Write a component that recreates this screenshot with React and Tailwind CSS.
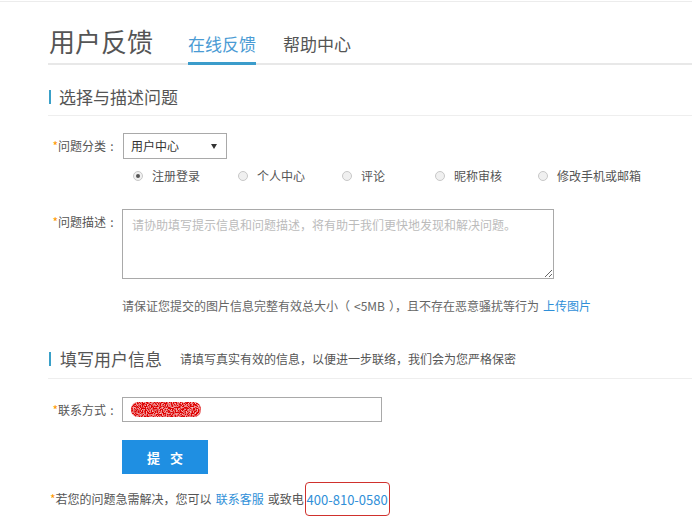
import React from "react";

const font = { fontFamily: '"Noto Sans CJK SC", "Noto Sans", sans-serif' };

function Label({ children }) {
  return (
    <div className="flex w-[70px] shrink-0 items-center justify-end text-[12px] leading-none text-[#555]">
      <span className="text-[#f90]">*</span>
      <span>{children}</span>
      <span className="inline-block w-[12px] text-center">:</span>
    </div>
  );
}

function Radio({ checked, label, w }) {
  return (
    <div className={`flex items-center ${w}`}>
      <span className="flex h-[10px] w-[10px] items-center justify-center rounded-full border border-[#c8c8c8] bg-[#f0f0f0]">
        {checked && <span className="h-[4px] w-[4px] rounded-full bg-[#555]" />}
      </span>
      <span className="ml-[9px] text-[12px] leading-none text-[#555]">{label}</span>
    </div>
  );
}

export default function App() {
  return (
    <div className="relative h-[528px] w-[692px] overflow-hidden bg-white" style={font}>
      <div className="mt-px h-px w-full bg-[#ececec]" />
      <div className="pl-[48px]">
        {/* Header */}
        <div className="flex h-[63px] items-end border-b-2 border-[#e8e8e8]">
          <div className="pb-[9px] pl-[1px] text-[26px] leading-none text-[#555]">用户反馈</div>
          <div className="-mb-[2px] ml-[35px] border-b-[3px] border-[#3b9ccb] pb-[10px] text-[17px] leading-none text-[#4a9bd4]">
            在线反馈
          </div>
          <div className="-mb-[2px] ml-[27px] border-b-[3px] border-transparent pb-[10px] text-[17px] leading-none text-[#555]">
            帮助中心
          </div>
        </div>

        {/* Section 1 */}
        <div className="mt-[23px]">
          <div className="flex items-center border-b border-[#eeeeee] pb-[10px] pl-px">
            <span className="h-[14px] w-[2px] bg-[#3aa0c8]" />
            <span className="ml-[8px] text-[17px] leading-none text-[#555]">选择与描述问题</span>
          </div>
        </div>

        {/* 问题分类 */}
        <div className="mt-[17px] flex items-center">
          <Label>问题分类</Label>
          <div className="ml-[5px] flex h-[26px] w-[104px] items-center justify-between border border-[#a9a9a9] pl-[7px] pr-[9px]">
            <span className="text-[12px] leading-none text-[#333]">用户中心</span>
            <svg width="6" height="5" viewBox="0 0 6 5">
              <path d="M0 0 L6 0 L3 5 Z" fill="#333" />
            </svg>
          </div>
        </div>
        <div className="mt-[11px] flex items-center pl-[85px]">
          <Radio checked label="注册登录" w="w-[105px]" />
          <Radio label="个人中心" w="w-[104px]" />
          <Radio label="评论" w="w-[93px]" />
          <Radio label="昵称审核" w="w-[103px]" />
          <Radio label="修改手机或邮箱" w="" />
        </div>

        {/* 问题描述 */}
        <div className="mt-[27px] flex items-start">
          <div className="pt-[7px]">
            <Label>问题描述</Label>
          </div>
          <textarea
            className="ml-[4px] h-[70px] w-[432px] border border-[#a9a9a9] px-[9px] py-[6px] text-[12px] leading-[18px] text-[#333] outline-none placeholder:text-[#bbbbbb]"
            style={font}
            placeholder="请协助填写提示信息和问题描述，将有助于我们更快地发现和解决问题。"
          />
        </div>
        <div className="mt-[21px] flex items-center pl-[74px] text-[12px] leading-none text-[#666]">
          <span>请保证您提交的图片信息完整有效总大小（</span>
          <span className="px-[4px]">&lt;5MB</span>
          <span>），且不存在恶意骚扰等行为</span>
          <span className="ml-[4px] text-[#2f8fd8]">上传图片</span>
        </div>

        {/* Section 2 */}
        <div className="mt-[38px]">
          <div className="flex items-center border-b border-[#eeeeee] pb-[11px] pl-px">
            <span className="h-[14px] w-[2px] bg-[#3aa0c8]" />
            <span className="ml-[9px] text-[17px] leading-none text-[#555]">填写用户信息</span>
            <span className="ml-[18px] text-[12px] leading-none text-[#555]">
              请填写真实有效的信息，以便进一步联络，我们会为您严格保密
            </span>
          </div>
        </div>

        {/* 联系方式 */}
        <div className="mt-[18px] flex items-center">
          <Label>联系方式</Label>
          <div className="ml-[4px] flex h-[25px] w-[260px] items-center border border-[#a9a9a9] pl-[7px]">
            <svg width="72" height="17" viewBox="0 0 72 17">
              <defs>
                <filter id="n" x="0" y="0" width="100%" height="100%">
                  <feTurbulence type="fractalNoise" baseFrequency="0.8" numOctaves="2" seed="3" result="t" />
                  <feColorMatrix in="t" type="matrix" values="0 0 0 0 1  0 0 0 0 0.6  0 0 0 0 0.6  0 0 0 -2.5 1.4" result="m" />
                  <feComposite in="m" in2="SourceGraphic" operator="in" result="c" />
                  <feMerge>
                    <feMergeNode in="SourceGraphic" />
                    <feMergeNode in="c" />
                  </feMerge>
                </filter>
              </defs>
              <rect x="1" y="1" width="70" height="15" rx="7" fill="#e00000" filter="url(#n)" />
            </svg>
          </div>
        </div>
        <div className="mt-[18px] pl-[74px]">
          <div className="flex h-[34px] w-[86px] items-center justify-center bg-[#1f8fe2] text-[13px] font-bold leading-none tracking-[10px] text-white">
            <span className="pl-[10px]">提交</span>
          </div>
        </div>

        {/* bottom line */}
        <div className="mt-[8px] flex items-center pl-[2px] text-[12px] leading-none text-[#555]">
          <span className="text-[#f90]">*</span>
          <span>若您的问题急需解决，您可以</span>
          <span className="ml-[4px] text-[#2f8fd8]">联系客服</span>
          <span className="ml-[4px]">或致电</span>
          <span className="ml-[1px] inline-flex h-[34px] w-[85px] items-center justify-center rounded-[4px] border border-[#d0312d] text-[13px] text-[#2f8fd8]">
            400-810-0580
          </span>
        </div>
      </div>
    </div>
  );
}
